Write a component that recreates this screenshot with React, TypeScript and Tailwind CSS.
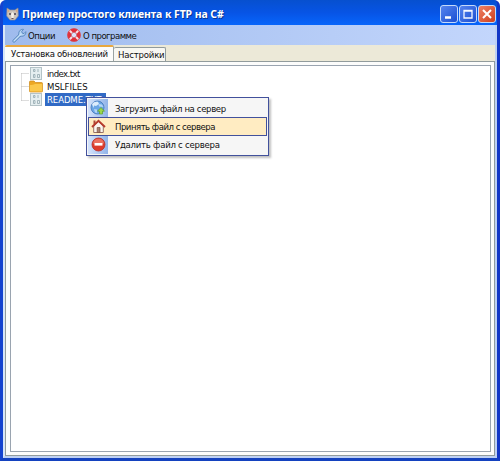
import React from "react";

const Wrench = () => (
  <svg width="15" height="15" viewBox="0 0 15 15">
    <path d="M2 13 L8.5 6.5" stroke="#4d7fb8" strokeWidth="3" strokeLinecap="round" />
    <path d="M7 7.6 C6 4 8 1 11.5 1.3 L9.7 3.6 L10.3 5.2 L12 5.6 L13.8 3.6 C14.4 7 11 9.5 7 7.6Z" fill="#b4d2f2" stroke="#4d7fb8" strokeWidth=".8" />
    <path d="M2 13 L9 6" stroke="#c6e0f9" strokeWidth="1.6" strokeLinecap="round" />
  </svg>
);

const Buoy = () => (
  <svg width="14" height="14" viewBox="0 0 14 14">
    <circle cx="7" cy="7" r="4.6" fill="none" stroke="#e22f38" strokeWidth="4" />
    <path d="M2.300 2.300 L5.200 5.200 M11.700 2.300 L8.800 5.200 M2.300 11.700 L5.200 8.800 M11.700 11.700 L8.800 8.800" stroke="#f8e0e4" strokeWidth="2" />
    <circle cx="7" cy="7" r="6.4" fill="none" stroke="#d84750" strokeWidth=".8" />
    <circle cx="7" cy="7" r="2.7" fill="#dbe4fa" stroke="#c23b45" strokeWidth=".6" />
  </svg>
);

const AppIcon = () => (
  <svg width="13" height="14" viewBox="0 0 13 14">
    <path d="M1 1 L4 3 H9 L12 1 L12.3 9 L9 13 H4 L.7 9Z" fill="#cbc3bb" stroke="#8b8791" strokeWidth=".7" />
    <path d="M1.5 2 L3.5 4 L1.7 6Z M11.5 2 L9.5 4 L11.3 6Z" fill="#d9a57b" />
    <path d="M3 7 H5 M8 7 H10" stroke="#4b4350" strokeWidth="1.3" />
    <path d="M5 7 L6.5 5 L8 7 L7.5 11 H5.5Z" fill="#f4f0e8" />
    <path d="M5.5 11.5 H7.5" stroke="#60505a" strokeWidth="1.2" />
  </svg>
);

const FileIcon = () => (
  <svg className="block" width="14" height="13" viewBox="0 0 14 13">
    <rect x="1.5" y=".5" width="11" height="12" fill="#e5eef0" stroke="#b4c3c7" />
    <path d="M4.5 2.5 h1.500 v2 h-1.500z M9 2 v3 M4.500 7.500 h1.500 v3 h-1.500z M8.500 7.500 h2 v3 h-2z" fill="none" stroke="#93a7ae" strokeWidth=".8" />
  </svg>
);

const FolderIcon = () => (
  <svg className="block" width="14" height="13" viewBox="0 0 14 13">
    <path d="M.5 2 Q.5 1 1.5 1 H5 L6.5 2.5 H12.5 Q13.5 2.5 13.5 3.5 V11 Q13.5 12 12.5 12 H1.5 Q.5 12 .5 11Z" fill="#eda824" stroke="#cb8619" strokeWidth=".7" />
    <path d="M.8 5 Q4 5.2 6 4 H13.2 V11.5 H.8Z" fill="#fbc84c" />
  </svg>
);

const Globe = () => (
  <svg width="16" height="16" viewBox="0 0 16 16">
    <circle cx="7.5" cy="7.5" r="6.5" fill="#6ba6e6" stroke="#3f73b7" strokeWidth=".8" />
    <path d="M2 4 Q4 1 8 1.8 L9 4 L6 6 L4 5.5 L3.5 8Z" fill="#dcecfc" />
    <path d="M8.5 4 L12 4.5 L13.5 7 L9 6.5Z M4 9 L7 9.5 L7 13 L5 12.5Z" fill="#b4d5f6" />
    <path d="M11 7.500 L14.500 11.200 H12.500 V14 H9.500 V11.200 H7.500Z" fill="#9bd84a" stroke="#5c9f2d" strokeWidth=".7" />
  </svg>
);

const House = () => (
  <svg width="15" height="15" viewBox="0 0 15 15">
    <path d="M2.7 7 V13.500 H12.3 V7 L7.5 2.5Z" fill="#fbf6ef" stroke="#987266" strokeWidth="1" />
    <path d="M2.500 1.500 H4.500 V5 H2.500Z" fill="#ad4b39" />
    <path d="M1 8 L7.5 1.8 L14 8" fill="none" stroke="#b63b2d" strokeWidth="1.9" />
    <path d="M6.200 8.5 H9 V13.500 H6.200Z" fill="#a8826f" stroke="#7d4c3f" strokeWidth=".7" />
  </svg>
);

const Remove = () => (
  <svg width="15" height="15" viewBox="0 0 15 15">
    <circle cx="7.5" cy="7.5" r="6.5" fill="#dd3c2b" stroke="#b82d27" strokeWidth=".8" />
    <path d="M2 6.5 Q2.5 2 7.5 1.8 Q12.5 2 13 6.5Z" fill="#ee8170" opacity=".75" />
    <rect x="3.5" y="6" width="8" height="2.6" fill="#fff" />
  </svg>
);

const files = [
  { name: "index.txt", icon: <FileIcon />, tracking: "tracking-[-0.55px]" },
  { name: "MSLFILES", icon: <FolderIcon />, tracking: "tracking-[0px]" },
  { name: "README.TXT", icon: <FileIcon />, tracking: "tracking-[-0.1px]", selected: true },
];

const commands = [
  { label: "Загрузить файл на сервер", icon: <Globe />, tracking: "tracking-[-0.36px]" },
  { label: "Принять файл с сервера", icon: <House />, tracking: "tracking-[-0.5px]", active: true },
  { label: "Удалить файл с сервера", icon: <Remove />, tracking: "tracking-[-0.25px]" },
];

const winButton = "flex h-[18px] w-[18px] items-center justify-center rounded-[3px] border border-[#c5dafa]";

export default function App() {
  return (
    <div className="relative flex h-[462px] w-[500px] flex-col overflow-hidden bg-white font-['DejaVu_Sans_Condensed','DejaVu_Sans',sans-serif] text-[9.5px] leading-[13px] text-[#101010]">
      <div className="flex h-[461px] w-[500px] flex-col overflow-hidden rounded-t-[6px] border-x-[3px] border-b-[3px] border-l-[#1543cf] border-r-[#1236c6] border-b-[#1442bf] bg-[#0756e5]">
        <header className="flex h-[25px] shrink-0 items-center bg-linear-to-b from-[#0750cf] via-[#0754e5] to-[#0765fb] pl-[3px] pr-[1px] pt-[3px]">
          <AppIcon />
          <h1 className="ml-[3px] whitespace-nowrap font-['Noto_Sans',sans-serif] text-[10.5px] font-bold tracking-[-0.08px] text-white [text-shadow:1px_1px_#083590]">Пример простого клиента к FTP на C#</h1>
          <div className="-mt-px ml-auto flex gap-[1px]">
            <div className={`${winButton} bg-linear-to-br from-[#5583ee] to-[#1b4ed2]`}><svg width="14" height="14"><path d="M3 10.5h6" stroke="#fff" strokeWidth="2.5" /></svg></div>
            <div className={`${winButton} bg-linear-to-br from-[#5583ee] to-[#1b4ed2]`}><svg width="14" height="14"><path d="M3 3.5h8v7.500h-8z M3 4h8" fill="none" stroke="#f5f8ff" strokeWidth="1.3" /></svg></div>
            <div className={`${winButton} bg-linear-to-br from-[#ee8063] to-[#cf3d18]`}><svg width="14" height="14"><path d="M3 3l8 8M11 3l-8 8" stroke="#fff" strokeWidth="2" /></svg></div>
          </div>
        </header>
        <main className="flex min-h-0 grow flex-col border-x-2 border-b-2 border-[#bdd0f3] border-l-[#d8e6f8] bg-[#ece9d8]">
          <nav className="flex h-[20px] shrink-0 items-center bg-linear-to-r from-[#9fbbed] to-[#c3d6fc] pl-[7px]">
            <Wrench />
            <span className="ml-px w-[27px] whitespace-nowrap tracking-[-0.45px]">Опции</span>
            <span className="ml-[12px]"><Buoy /></span>
            <span className="ml-[2px] whitespace-nowrap tracking-[-0.52px]">О программе</span>
          </nav>
          <div className="flex h-[16px] shrink-0 items-end">
            <div className="h-[16px] w-[109px] whitespace-nowrap rounded-t-[2px] border-r border-t-2 border-r-[#9aa3a4] border-t-[#e9a83f] bg-[#fcfcfb] pl-[6px] tracking-[-0.3px]">Установка обновлений</div>
            <div className="h-[14px] w-[52px] whitespace-nowrap rounded-t-[2px] border-r border-t border-[#919b9c] bg-[#f8f7f2] pl-[4px] tracking-[-0.2px]">Настройки</div>
          </div>
          <section className="flex min-h-0 grow border border-[#919b9c] bg-[#fcfcfb] pb-[3px] pl-[4px] pr-[3px] pt-[3px]">
            <div className="grow border border-[#9aa4b0] bg-white pl-[10px] pt-[1px]">
              <div className="relative pl-[8px]">
                <svg className="absolute left-0 top-0" width="10" height="40"><path d="M.5 6.5v27 M.5 6.5h8 M.5 19.5h8 M.5 33.5h8" fill="none" stroke="#bbb" strokeDasharray="1 1" /></svg>
                {files.map((file) => (
                  <div key={file.name} className="flex h-[13px] items-center">
                    {file.icon}
                    <span className={`ml-[2px] h-[13px] whitespace-nowrap px-[2px] ${file.tracking} ${file.selected ? "w-[61px] bg-[#316ac5] text-white" : ""}`}>{file.name}</span>
                  </div>
                ))}
              </div>
            </div>
          </section>
        </main>
      </div>
      <div className="absolute left-[86px] top-[97px] flex h-[59px] w-[183px] flex-col border border-[#42519c] bg-[#f6f6f6] p-px shadow-[2px_2px_2px_#7777]">
        {commands.map((command) => (
          <div key={command.label} className={`flex h-[19px] min-h-0 grow items-center ${command.active ? "border border-[#42519c] bg-[#ffecc2]" : ""}`}>
            <div className={`flex h-full shrink-0 items-center justify-center ${command.active ? "w-[19px]" : "w-[20px] bg-linear-to-r from-[#d4e3fb] to-[#91b3e8]"}`}>{command.icon}</div>
            <span className={`ml-[7px] whitespace-nowrap ${command.tracking}`}>{command.label}</span>
          </div>
        ))}
      </div>
    </div>
  );
}
